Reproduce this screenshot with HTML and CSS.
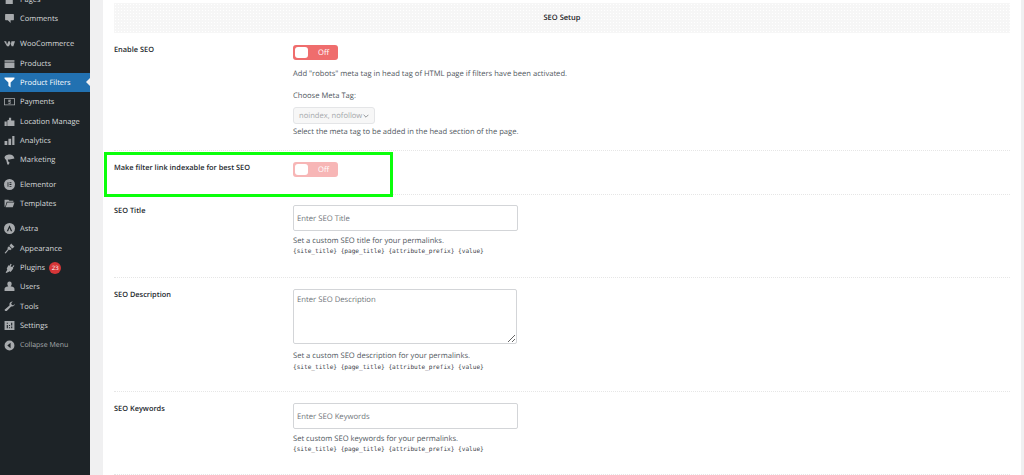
FILE: index.html
```html
<!DOCTYPE html>
<html lang="en">
<head>
<meta charset="utf-8">
<title>SEO Setup</title>
<link rel="stylesheet" href="styles.css">
</head>
<body>
<div class="page">
  <nav class="sidebar">
    <ul class="menu">
      <li class="item"><svg class="ico" viewBox="0 0 20 20"><path d="M4 1h10v1H4zM3 3h12v1H3zM3 5h13v13H3z"/></svg><span>Pages</span></li>
      <li class="item"><svg class="ico" viewBox="0 0 20 20"><path d="M3 2h14a1 1 0 0 1 1 1v9a1 1 0 0 1-1 1h-5v5l-5-5H3a1 1 0 0 1-1-1V3a1 1 0 0 1 1-1z"/></svg><span>Comments</span></li>
      <li class="item sep"><svg class="ico" viewBox="0 0 20 20"><path d="M0 6h4l1.500 6L8 6h2.500l2 6 1-6H20l-3 9h-3l-2.500-5L9 15H5.500z"/></svg><span>WooCommerce</span></li>
      <li class="item"><svg class="ico" viewBox="0 0 20 20"><path d="M1 4h18v3H1zM1 8h18v10H1z"/></svg><span>Products</span></li>
      <li class="item current"><svg class="ico" viewBox="0 0 20 20"><path d="M1 1h18v2l-7 7v9l-4-3v-6L1 3z"/></svg><span>Product Filters</span></li>
      <li class="item"><svg class="ico" viewBox="0 0 20 20"><path fill-rule="evenodd" d="M0 4h20v13H0zM1.500 5.500v10h17v-10zM8 7h4.500v1.500H9.500v1H12V14H8v-1.500h3v-1H8z"/></svg><span>Payments</span></li>
      <li class="item"><svg class="ico" viewBox="0 0 20 20"><path d="M1 10h4v8H1zM6 8l3-1V3h4v5h6v10H6z"/></svg><span>Location Manage</span></li>
      <li class="item"><svg class="ico" viewBox="0 0 20 20"><path d="M1 11h5v7H1zM8 7h5v11H8zM15 2h4v16h-4z"/></svg><span>Analytics</span></li>
      <li class="item"><svg class="ico" viewBox="0 0 20 20"><path d="M10 1c5 0 8 3 9 7l-9 2H7l1 4 2 1-1 4H6l-2-8a6 6 0 0 1-3-4c0-4 5-6 9-6z"/></svg><span>Marketing</span></li>
      <li class="item sep"><svg class="ico" viewBox="0 0 20 20"><path fill-rule="evenodd" d="M10 0a10 10 0 1 1 0 20 10 10 0 0 1 0-20zM6.500 6v8H8V6zM10 6v1.500h3.500V6zM10 9.300v1.500h3.500V9.300zM10 12.500V14h3.500v-1.500z"/></svg><span>Elementor</span></li>
      <li class="item"><svg class="ico" viewBox="0 0 20 20"><path d="M1 3h7l2 2h7v2H5l-3 9H1zM6 8h13l-3 9H3z"/></svg><span>Templates</span></li>
      <li class="item sep"><svg class="ico" viewBox="0 0 20 20"><path fill-rule="evenodd" d="M10 0a10 10 0 1 1 0 20 10 10 0 0 1 0-20zM10 4 5 15h2.500l2.500-6 2.500 6H15z"/></svg><span>Astra</span></li>
      <li class="item"><svg class="ico" viewBox="0 0 20 20"><path d="M13 1l6 6-4 3-5-5zM9 6l5 5-3 2-2-1-6 7-2-1 6-7-1-2z"/></svg><span>Appearance</span></li>
      <li class="item"><svg class="ico" viewBox="0 0 20 20"><path d="M12 3l2 1-2 4 3 1 2-3 2 1-3 4 1 1-5 6-2-1-2 1-4 2-1-1 3-5-1-2 3-6 2 1z"/></svg><span>Plugins</span><b class="badge">23</b></li>
      <li class="item"><svg class="ico" viewBox="0 0 20 20"><path d="M10 1a4 4 0 0 1 4 4c0 2-1 4-2 5 3 0 7 1 7 4v4H1v-4c0-3 4-4 7-4-1-1-2-3-2-5a4 4 0 0 1 4-4z"/></svg><span>Users</span></li>
      <li class="item"><svg class="ico" viewBox="0 0 20 20"><path d="M19 5c1 3-2 6-6 5l-8 8c-1 1-4 0-4-2l9-8c-1-4 2-7 6-7l-3 3 1 3 3 1z"/></svg><span>Tools</span></li>
      <li class="item"><svg class="ico" viewBox="0 0 20 20"><path fill-rule="evenodd" d="M1 2h18v16H1zM5 5v2h2V5zM5 9v6h2V9zM9 9v2h2V9zM9 13v2h2v-2zM13 5v5h2V5zM13 12v3h2v-3z"/></svg><span>Settings</span></li>
      <li class="item collapse"><svg class="ico" viewBox="0 0 20 20"><path fill-rule="evenodd" d="M10 1a9 9 0 1 1 0 18 9 9 0 0 1 0-18zM12 5l-6 5 6 5z"/></svg><span>Collapse Menu</span></li>
    </ul>
  </nav>
  <main class="content">
    <section class="panel">
      <h2 class="band">SEO Setup</h2>

      <div class="row row-enable">
        <div class="label">Enable SEO</div>
        <div class="field">
          <div class="toggle"><i class="knob"></i><span>Off</span></div>
          <p class="help help-toggle">Add "robots" meta tag in head tag of HTML page if filters have been activated.</p>
          <p class="help sub">Choose Meta Tag:</p>
          <div class="select">noindex, nofollow<svg class="chev" viewBox="0 0 10 6"><path d="M1 1l4 4 4-4" fill="none" stroke="#6b6f73" stroke-width="1.200"/></svg></div>
          <p class="help help-select">Select the meta tag to be added in the head section of the page.</p>
        </div>
      </div>

      <div class="row row-link">
        <div class="label">Make filter link indexable for best SEO</div>
        <div class="field">
          <div class="toggle faded"><i class="knob"></i><span>Off</span></div>
        </div>
        <div class="highlight"></div>
      </div>

      <div class="row row-title">
        <div class="label">SEO Title</div>
        <div class="field">
          <input class="input" type="text" placeholder="Enter SEO Title">
          <p class="help">Set a custom SEO title for your permalinks.</p>
          <code class="tags">{site_title} {page_title} {attribute_prefix} {value}</code>
        </div>
      </div>

      <div class="row row-desc">
        <div class="label">SEO Description</div>
        <div class="field">
          <textarea class="input area" placeholder="Enter SEO Description"></textarea>
          <p class="help">Set a custom SEO description for your permalinks.</p>
          <code class="tags">{site_title} {page_title} {attribute_prefix} {value}</code>
        </div>
      </div>

      <div class="row row-keys">
        <div class="label">SEO Keywords</div>
        <div class="field">
          <input class="input" type="text" placeholder="Enter SEO Keywords">
          <p class="help">Set custom SEO keywords for your permalinks.</p>
          <code class="tags">{site_title} {page_title} {attribute_prefix} {value}</code>
        </div>
      </div>
    </section>
  </main>
</div>
</body>
</html>
```
FILE: styles.css
```css
* { box-sizing: border-box; }
html, body { margin: 0; padding: 0; height: 475px; overflow: hidden; }
body { font-family: "Open Sans", "Noto Sans", sans-serif; background: #f0f0f1; color: #2c3338; text-rendering: geometricPrecision; }
.page { display: flex; height: 475px; }

.sidebar { width: 90px; flex: none; background: #1d2327; overflow: hidden; }
.menu { list-style: none; margin: -10px 0 0; padding: 0; }
.item { display: flex; align-items: center; height: 19.3px; padding-left: 4px; color: #d8dbdd; font-size: 7.500px; white-space: nowrap; }
.item.sep { margin-top: 5.700px; }
.item span { margin-left: 5px; padding-top: 1px; }
.ico { width: 11px; height: 11px; fill: #a7aaad; flex: none; }
.current { background: #2271b1; color: #fff; position: relative; }
.current .ico { fill: #fff; }
.current::after { content: ""; position: absolute; right: 0; top: 5.500px; border: 4.500px solid transparent; border-right-color: #f0f0f1; border-left: 0; }
.badge { margin-left: 4px; width: 12px; height: 12px; line-height: 12px; border-radius: 50%; background: #d63638; color: #fff; font-size: 6px; font-weight: 400; text-align: center; }
.collapse { margin-top: 0.500px; color: #a7aaad; font-size: 7px; }

.content { flex: 1; padding-left: 13px; padding-right: 3px; min-width: 0; }
.panel { background: #fff; height: 475px; padding: 3px 11px 0; }
.band { margin: 0; height: 30px; line-height: 31px; text-align: center; font-size: 7.500px; font-weight: 600; color: #1d2327;
  background-color: #f6f6f6; background-image: radial-gradient(#fff 0.6px, transparent 0.7px); background-size: 3px 3px; }

.row { position: relative; display: flex; border-bottom: 1px dotted #e6e6e6; }
.label { width: 179px; flex: none; font-size: 7.400px; font-weight: 600; color: #23282d; line-height: 12px; }
.field { flex: 1; min-width: 0; }
.row-enable { height: 118px; padding-top: 10px; }
.row-link { height: 44px; padding-top: 10px; }
.row-title { height: 83px; padding-top: 10px; }
.row-desc { height: 114px; padding-top: 11px; }
.row-keys { height: 83px; padding-top: 11px; }
.row-enable .label, .row-link .label { margin-top: 1px; }

.toggle { display: flex; align-items: center; width: 45px; height: 15px; margin-top: 2px; padding: 2px; border-radius: 3px; background: #ef6d6d; color: #fff; font-size: 7.600px; }
.toggle span { margin-left: 10px; }
.knob { width: 13px; height: 11px; border-radius: 3px; background: #fff; }
.toggle.faded { background: #f7b6b6; margin-top: 1px; }

.help { margin: 0; font-size: 7.600px; line-height: 12px; color: #50575e; }
.help-toggle { margin-top: 8px; }
.sub { margin-top: 10px; }
.select { display: flex; align-items: center; justify-content: space-between; width: 82px; height: 17px; margin-top: 5px; padding: 0 5px; border: 1px solid #e4e5e7; border-radius: 3px; background: #f7f7f7; color: #a5a8ab; font-size: 7.600px; white-space: nowrap; }
.chev { width: 6px; height: 4px; flex: none; }
.help-select { margin-top: 2px; }

.input { display: block; width: 225px; height: 26px; padding: 1px 3px 0; border: 1px solid #d3d5d8; border-radius: 2px; background: #fff; font-family: inherit; font-size: 7.700px; color: #50575e; outline: none; text-rendering: geometricPrecision; }
.input::placeholder { color: #70757a; opacity: 1; }
.area { width: 224px; height: 55px; padding-top: 5px; resize: vertical; }
.input + .help { margin-top: 4px; }
.area + .help { margin-top: 6px; }
.tags { display: block; font-family: "DejaVu Sans Mono", "Liberation Mono", monospace; font-size: 6.100px; line-height: 9px; color: #3c434a; white-space: nowrap; }
.area ~ .tags { margin-top: 1px; }

.highlight { position: absolute; left: -10px; top: 1px; width: 289px; height: 45px; border: 3px solid #0bff0b; pointer-events: none; }
```
